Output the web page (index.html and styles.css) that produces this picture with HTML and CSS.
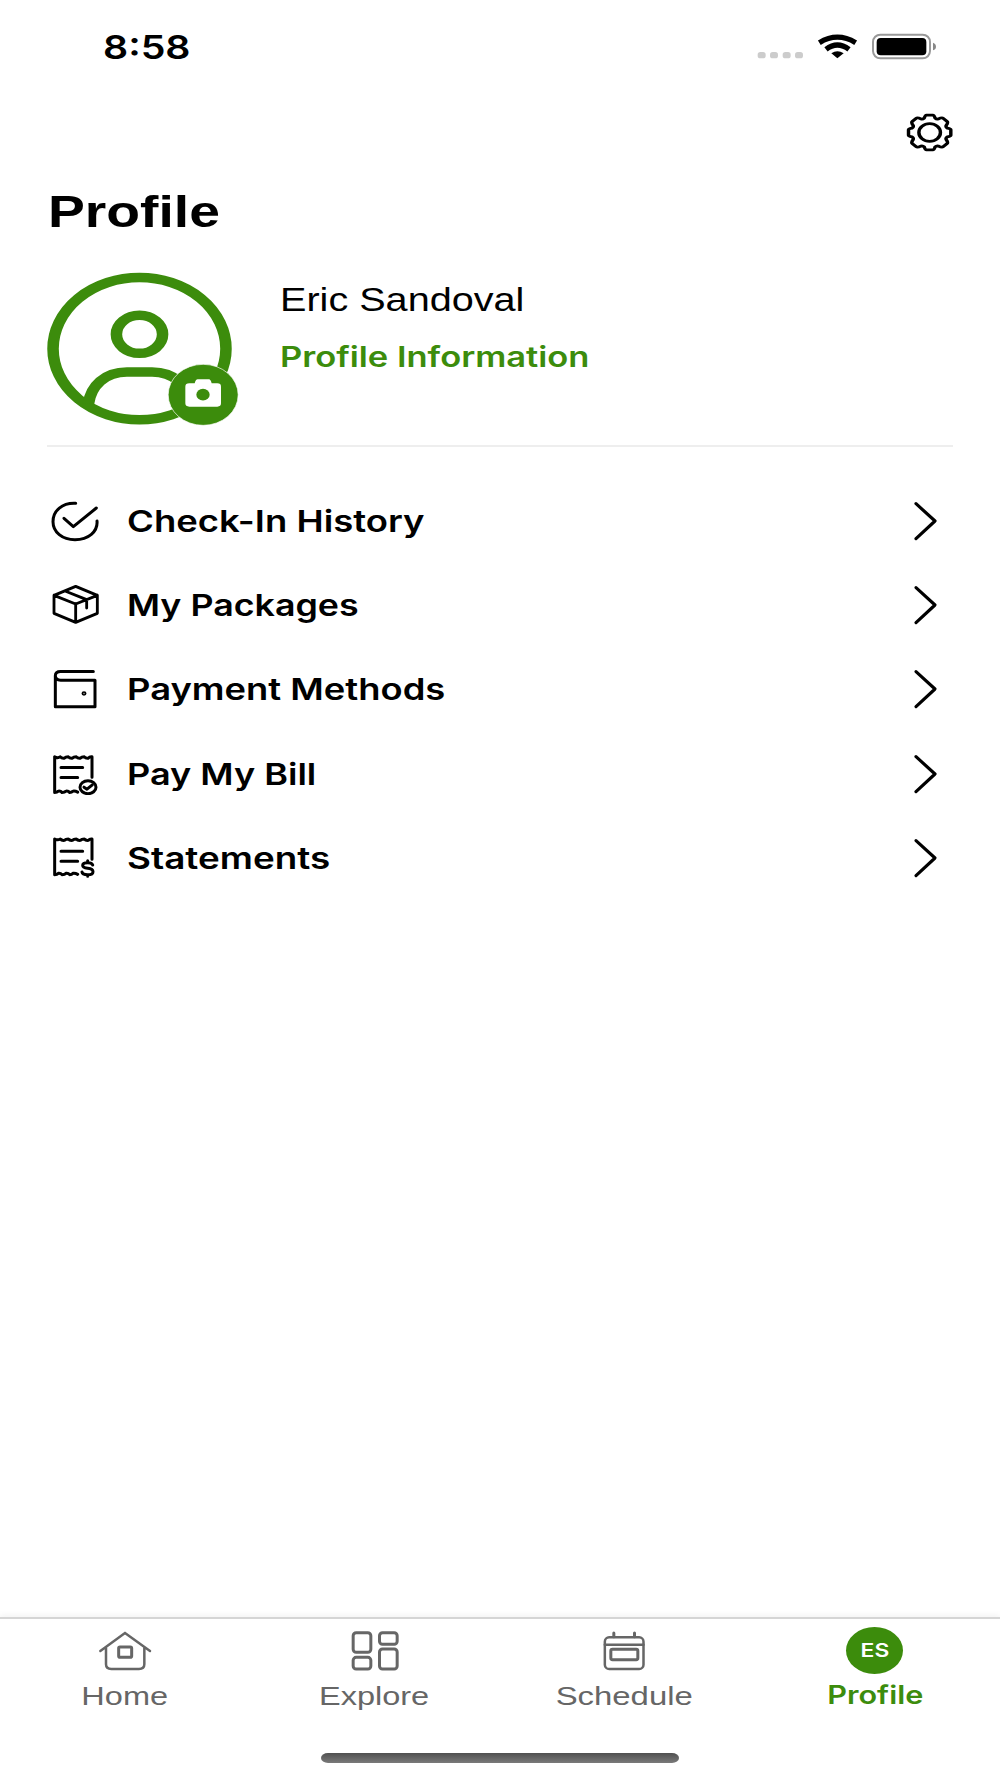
FILE: index.html
```html
<!DOCTYPE html>
<html lang="en">
<head>
<meta charset="utf-8">
<title>Profile</title>
<link rel="stylesheet" href="styles.css">
</head>
<body>
<div class="screen">
  <header class="status">
    <span class="time wide">8:58</span>
    <svg class="status-icons" viewBox="75 60 555 96" aria-hidden="true">
      <g fill="#ccc"><rect x="83" y="126" width="24" height="19" rx="8"/><rect x="120" y="126" width="24" height="19" rx="8"/><rect x="158" y="126" width="24" height="19" rx="8"/><rect x="195" y="126" width="24" height="19" rx="8"/></g>
      <g fill="none" stroke="#000" stroke-width="16"><path d="M268 98Q322 65 377 98"/><path d="M288 118Q322 92 357 118"/></g>
      <path d="M304 130Q322 117 341 130L322 145Z"/>
      <rect x="429" y="74" width="171" height="71" rx="22" fill="none" stroke="#999" stroke-width="6"/>
      <rect x="440" y="84" width="149" height="52" rx="12"/>
      <path d="M609 98Q618 101 618 110Q618 118 609 121Z" fill="#888"/>
    </svg>
  </header>

  <div class="toolbar">
    <svg class="gear" viewBox="525 306 150 123" aria-label="Settings">
      <g transform="translate(599 367.500) scale(1.22 1)" fill="none" stroke="#000" stroke-width="8.500" stroke-linejoin="round">
        <path d="M-13.2-43.5Q-11-52-8-52H8Q11-52 13.2-43.5Q17-39 21.1-40.5Q30-46 33-43L43-33Q46-30 40.5-21.1Q39-17 43.5-13.2Q52-11 52-8V8Q52 11 43.5 13.2Q39 17 40.5 21.1Q46 30 43 33L33 43Q30 46 21.1 40.5Q17 39 13.2 43.5Q11 52 8 52H-8Q-11 52-13.2 43.5Q-17 39-21.1 40.5Q-30 46-33 43L-43 33Q-46 30-40.5 21.1Q-39 17-43.5 13.2Q-52 11-52 8V-8Q-52-11-43.5-13.2Q-39-17-40.5-21.1Q-46-30-43-33L-33-43Q-30-46-21.1-40.5Q-17-39-13.2-43.5Z"/>
        <circle r="26.500"/>
      </g>
    </svg>
  </div>

  <main>
    <h1><span class="wide">Profile</span></h1>
    <section class="person">
      <svg class="avatar" viewBox="48 60 582 471" aria-hidden="true">
        <g transform="translate(328.500 296) scale(1.215 1)" fill="none" stroke="#3c8c0c" stroke-width="28.5">
          <circle r="213.5"/><circle cy="-43" r="57"/>
          <path d="M-126 165C-120 112-86 70-31 70H31C86 70 120 112 126 165"/>
        </g>
        <ellipse cx="519.500" cy="434.500" rx="105" ry="91.500" fill="#3c8c0c" stroke="#fff" stroke-width="2"/>
        <path d="M478 400H494Q497 388 503 388H537Q542 388 545 400H562Q573 400 573 410V460Q573 470 562 470H478Q466 470 466 460V410Q466 400 478 400Z" fill="#fff"/>
        <ellipse cx="519" cy="434" rx="20" ry="17.500" fill="#3c8c0c"/>
      </svg>
      <div class="person-text">
        <div class="name"><span class="wide">Eric Sandoval</span></div>
        <div class="info"><span class="wide">Profile Information</span></div>
      </div>
    </section>

    <ul class="menu">
      <li>
        <svg class="icon" viewBox="60 57 150 126"><path d="M137 67C97 65 69 89 69 122C69 153 97 176 135 176C175 176 204 152 201 120M102 112L130 137L199 81"/></svg>
        <span class="label wide l1">Check-In History</span>
        <svg class="chevron" viewBox="90 57 90 126"><path d="M108 68L165 120L108 173"/></svg>
      </li>
      <li>
        <svg class="icon box" viewBox="60 311 150 126"><path d="M137 318L202 345V399L137 426L72 399V345ZM72 345L137 371L202 345M137 371V426M105 332L170 358V383"/></svg>
        <span class="label wide l2">My Packages</span>
        <svg class="chevron" viewBox="90 57 90 126"><path d="M108 68L165 120L108 173"/></svg>
      </li>
      <li>
        <svg class="icon" viewBox="60 563.500 150 126"><path d="M190 574H92Q76 574 76 587Q76 600 92 600H195V680H76V587"/><ellipse cx="162" cy="640" rx="3" ry="2"/></svg>
        <span class="label wide l3">Payment Methods</span>
        <svg class="chevron" viewBox="90 57 90 126"><path d="M108 68L165 120L108 173"/></svg>
      </li>
      <li>
        <svg class="icon" viewBox="60 66.500 150 126"><path d="M186 139V78Q179 77 175 82Q167 83 163 78Q155 78 151 82Q143 83 139 78Q131 78 127 82Q119 83 115 78Q107 78 103 82Q95 83 91 78Q83 83 74 78V185Q81 185 85 181Q92 180 96 185Q104 185 108 181Q115 180 119 185Q125 185 129 181Q136 180 143 184M93 110H158M93 140H143"/><ellipse cx="174" cy="169" rx="24" ry="19.500"/><path d="M162 169L171 175L187 162"/></svg>
        <span class="label wide l4">Pay My Bill</span>
        <svg class="chevron" viewBox="90 57 90 126"><path d="M108 68L165 120L108 173"/></svg>
      </li>
      <li>
        <svg class="icon" viewBox="60 320 150 126"><path d="M186 387V326Q179 325 175 330Q167 331 163 326Q155 326 151 330Q143 331 139 326Q131 326 127 330Q119 331 115 326Q107 326 103 330Q95 331 91 326Q83 331 74 326V433Q81 433 85 429Q92 428 96 433Q104 433 108 429Q115 428 119 433Q125 433 129 429Q136 428 143 432M93 363H158M93 393H143M188 404Q186 397 173 397Q158 397 158 405Q158 412 173 414Q189 416 189 424Q189 433 173 433Q157 433 156 425M173 391V397M173 433V438"/></svg>
        <span class="label wide l5">Statements</span>
        <svg class="chevron" viewBox="90 57 90 126"><path d="M108 68L165 120L108 173"/></svg>
      </li>
    </ul>
  </main>

  <footer class="tabbar">
    <nav class="tabs">
      <a class="tab">
        <svg viewBox="165 48 180 144"><path d="M181 123L255 69L330 123M198 113V163Q198 177 214 177H297Q313 177 313 163V113"/><rect x="236" y="111" width="39" height="31" rx="4" stroke-width="9"/></svg>
        <span class="wide">Home</span>
      </a>
      <a class="tab">
        <svg viewBox="915.500 48 180 144"><g stroke-width="9"><rect x="940" y="68" width="53" height="59" rx="9"/><rect x="940" y="142" width="53" height="35" rx="9"/><rect x="1019" y="68" width="53" height="35" rx="9"/><rect x="1019" y="117" width="53" height="60" rx="9"/></g></svg>
        <span class="wide">Explore</span>
      </a>
      <a class="tab schedule">
        <svg viewBox="165.500 48 180 144"><rect x="195" y="82" width="116" height="95" rx="13"/><path d="M195 104H311"/><path d="M222 69V80M284 69V80" stroke-width="9"/><rect x="213" y="118" width="81" height="31" rx="5" stroke-width="9"/></svg>
        <span class="wide">Schedule</span>
      </a>
      <a class="tab active">
        <span class="initials"><span class="wide">ES</span></span>
        <span class="wide">Profile</span>
      </a>
    </nav>
    <div class="home-indicator"></div>
  </footer>
</div>
</body>
</html>
```
FILE: styles.css
```css
* { box-sizing: border-box; }
body { margin: 0; background: #fff; color: #000; font-family: "Liberation Sans", Arial, sans-serif; }
.screen { width: 1000px; height: 1778px; display: flex; flex-direction: column; }
svg { display: block; flex: none; }

/* Extended-width lettering */
.wide { display: inline-block; white-space: nowrap; transform: scaleX(var(--sx, 1.2)); transform-origin: left center; }

.status { height: 94px; padding: 0 60px 0 103px; display: flex; justify-content: space-between; align-items: center; }
.time { --sx: 1.19; font: 600 33px/40px Inter, sans-serif; }
.status-icons { width: 185px; height: 32px; margin-bottom: 2px; }
.toolbar { height: 77px; display: flex; justify-content: flex-end; align-items: flex-start; padding: 18px 45px 0 0; }
.gear { width: 50px; height: 41px; }

main { flex: 1; padding: 0 47px; }
h1 { margin: 0; height: 99px; padding: 1px 0 0 1px; font: 700 45px/80px "Liberation Sans", Arial, sans-serif; }
h1 .wide { --sx: 1.228; }
.person { height: 177px; display: flex; gap: 40px; border-bottom: 2px solid #eee; }
.avatar { width: 194px; height: 157px; margin-left: -1px; }
.person-text { padding-top: 10px; }
.name { font-size: 33px; line-height: 40px; --sx: 1.2; }
.info { margin-top: 16.5px; font: 600 28px/40px Inter, sans-serif; color: #3c8c0c; --sx: 1.232; }

.menu { list-style: none; margin: 0; padding: 31.4px 13px 0 3px; }
.menu li { height: 84.4px; display: flex; align-items: center; }
.icon { width: 50px; height: 42px; }
.icon path, .icon ellipse, .chevron path { fill: none; stroke: #000; stroke-width: 9; stroke-linecap: round; stroke-linejoin: round; }
.icon.box path { stroke-width: 8.5; }
.label { margin-left: 26.5px; font: 600 30px/40px Inter, sans-serif; }
.l1 { --sx: 1.216; }
.l2 { --sx: 1.193; }
.l3 { --sx: 1.212; }
.l4 { --sx: 1.202; }
.l5 { --sx: 1.228; }
.chevron { width: 30px; height: 42px; margin-left: auto; }
.chevron path { stroke-width: 9.5; }

.tabbar { height: 161px; border-top: 2px solid #d5d5d5; box-shadow: 0 -2px 6px rgba(0,0,0,.05); }
.tabs { display: grid; grid-template-columns: repeat(4, 1fr); height: 134px; color: #666; }
.tab { display: flex; flex-direction: column; align-items: center; padding-top: 7px; font-size: 26px; line-height: 40px; --sx: 1.25; }
.tab svg { width: 60px; height: 48px; fill: none; stroke: #666; stroke-width: 7.5; stroke-linecap: round; }
.tab .wide { transform-origin: center; margin: 2px 1px 0 0; }
.schedule { --sx: 1.265; }
.active { color: #3c8c0c; font-family: Inter, sans-serif; font-weight: 600; font-size: 25px; --sx: 1.225; }
.active > .wide { margin: 1px 0 0; }
.initials { width: 57px; height: 47px; border-radius: 50%; background: #3c8c0c; color: #fff; font-size: 19px; line-height: 48px; text-align: center; margin: 1px 0 0 -1px; --sx: 1.2; }
.initials .wide { margin: 0; }
.home-indicator { width: 358px; height: 10px; margin: 0 auto; border-radius: 7px / 5px; background: linear-gradient(#505050, #7a7a7a); }
```
